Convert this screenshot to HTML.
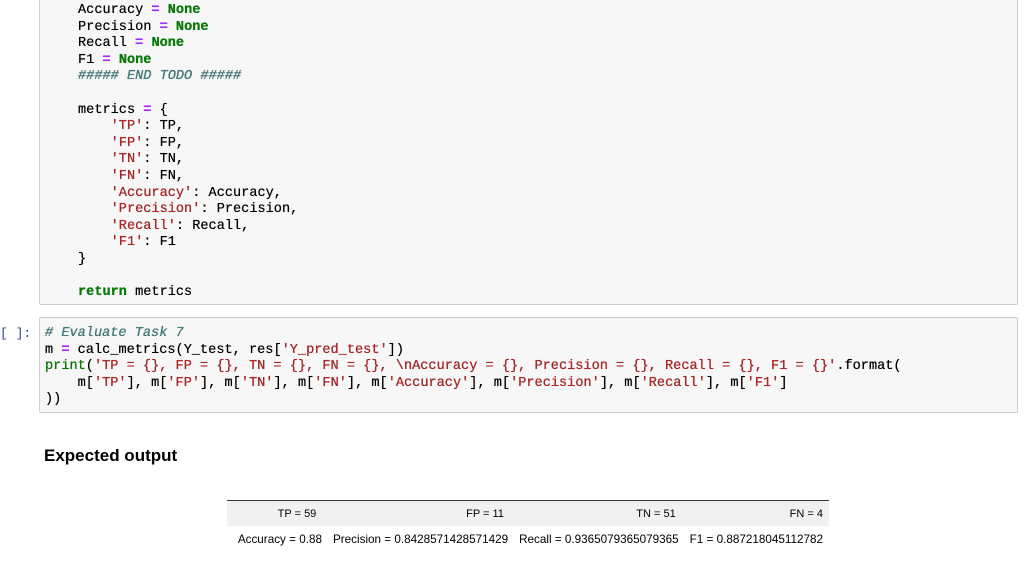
<!DOCTYPE html>
<html><head><style>
body{margin:0;background:#fff;width:1024px;height:567px;overflow:hidden;position:relative;font-family:"Liberation Sans",sans-serif}
.cell{position:absolute;left:39px;width:977px;background:#f7f7f7;border:1px solid #cfcfcf;border-radius:2px}
pre{margin:0;font-family:"Liberation Mono",monospace;font-size:13.6px;line-height:16.6px;color:#000;position:absolute;text-shadow:0 0 0.4px #000}
.k{color:#008000;font-weight:bold}
.o{color:#aa22ff;font-weight:bold}
.s{color:#ba2121}
.c{color:#408080;font-style:italic}
.b{color:#008000}
.p{position:absolute;left:0;top:326px;font-family:"Liberation Mono",monospace;font-size:13px;color:#303f9f}
h3{position:absolute;left:44px;top:446px;margin:0;font-size:17px;font-weight:bold;color:#000}
table{position:absolute;left:227px;top:500px;width:602px;border-collapse:collapse;border-top:1.5px solid #333;font-size:11px;color:#000;table-layout:fixed}
td{height:25px;padding:0 6px}
tr:first-child td{background:#f1f1f1}
.r2 td{height:26px;padding-top:0;font-size:11.7px}
.r2 span{margin-left:11px}
</style></head><body>
<div class="cell" style="top:-5px;height:308px"></div>
<pre style="left:78px;top:3px">Accuracy <span class="o">=</span> <span class="k">None</span>
Precision <span class="o">=</span> <span class="k">None</span>
Recall <span class="o">=</span> <span class="k">None</span>
F1 <span class="o">=</span> <span class="k">None</span>
<span class="c">##### END TODO #####</span>

metrics <span class="o">=</span> {
    <span class="s">'TP'</span>: TP,
    <span class="s">'FP'</span>: FP,
    <span class="s">'TN'</span>: TN,
    <span class="s">'FN'</span>: FN,
    <span class="s">'Accuracy'</span>: Accuracy,
    <span class="s">'Precision'</span>: Precision,
    <span class="s">'Recall'</span>: Recall,
    <span class="s">'F1'</span>: F1
}

<span class="k">return</span> metrics</pre>
<div class="p">[ ]:</div>
<div class="cell" style="top:317px;height:94px"></div>
<pre style="left:45px;top:326px"><span class="c"># Evaluate Task 7</span>
m <span class="o">=</span> calc_metrics(Y_test, res[<span class="s">'Y_pred_test'</span>])
<span class="b">print</span>(<span class="s">'TP = {}, FP = {}, TN = {}, FN = {}, \nAccuracy = {}, Precision = {}, Recall = {}, F1 = {}'</span>.format(
    m[<span class="s">'TP'</span>], m[<span class="s">'FP'</span>], m[<span class="s">'TN'</span>], m[<span class="s">'FN'</span>], m[<span class="s">'Accuracy'</span>], m[<span class="s">'Precision'</span>], m[<span class="s">'Recall'</span>], m[<span class="s">'F1'</span>]
))</pre>
<h3>Expected output</h3>
<table>
<colgroup><col style="width:140px"><col style="width:236px"><col style="width:106px"><col></colgroup>
<tr><td style="text-align:center">TP = 59</td><td style="text-align:center">FP = 11</td><td style="text-align:center">TN = 51</td><td style="text-align:right">FN = 4</td></tr>
<tr class="r2"><td colspan="4" style="text-align:right;white-space:nowrap">Accuracy = 0.88<span>Precision = 0.8428571428571429</span><span>Recall = 0.9365079365079365</span><span>F1 = 0.887218045112782</span></td></tr>
</table>
</body></html>
